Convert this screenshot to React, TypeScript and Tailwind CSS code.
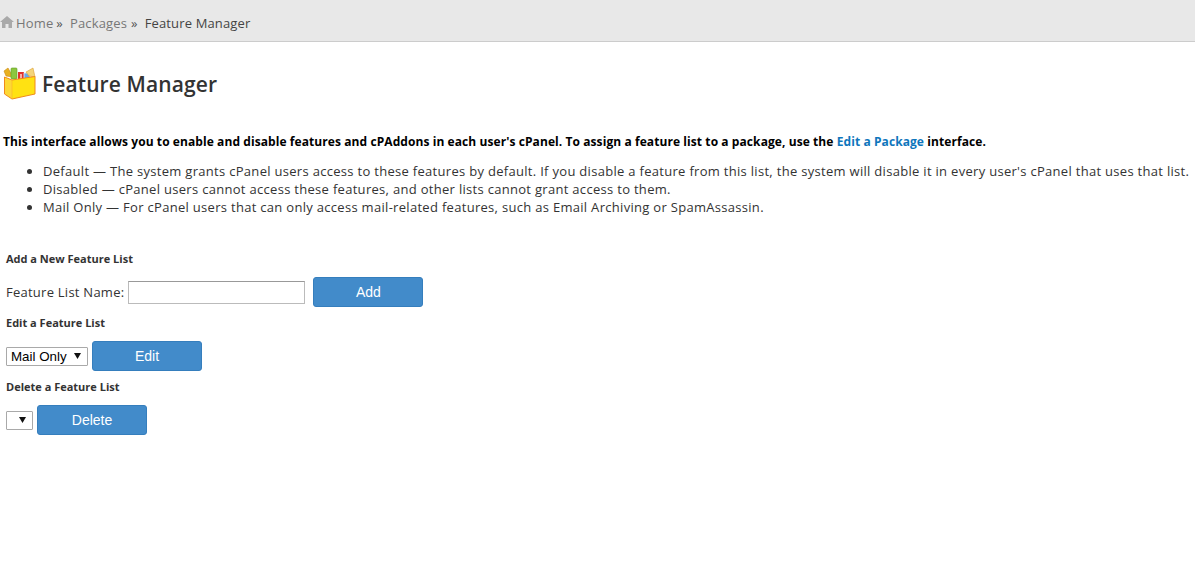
import React from "react";

const font = "font-['Open_Sans',sans-serif]";
const arial = "font-['Liberation_Sans',Arial,sans-serif]";

function Box() {
  return (
    <svg width="34" height="34" viewBox="3 4 34 34" className="block shrink-0">
      <path d="M6 13 L4 8 L8 5 L13 14 Z" fill="#e8b020" stroke="#c98a10" strokeWidth="0.6" />
      <rect x="11" y="5" width="6" height="11" rx="1" fill="#8cc63f" stroke="#5f9e20" strokeWidth="0.6" />
      <rect x="18" y="9" width="6" height="8" fill="#e0322c" />
      <rect x="20" y="11" width="2" height="6" fill="#f8b0a8" />
      <rect x="24" y="10" width="6" height="7" fill="#6aa7e8" stroke="#e8f0fb" strokeWidth="0.8" />
      <path d="M26 9 L33 5 L35 14 L29 13 Z" fill="#f4d47a" stroke="#dca030" strokeWidth="0.6" />
      <path d="M4.5 14 L12 17 L12 36 L4.5 31 Z" fill="#fdd835" />
      <path d="M12 17 L35 13.5 L35 31 L12 36 Z" fill="#ffe212" />
      <path d="M4.5 14 L12 17 L35 13.5 L35 31 L12 36 L4.5 31 Z" fill="none" stroke="#f08a1c" strokeWidth="1" strokeLinejoin="round" />
      <path d="M12 17 L12 36" fill="none" stroke="#f9b82a" strokeWidth="0.7" />
    </svg>
  );
}

function Home() {
  return (
    <svg width="14" height="12" viewBox="0 0 14 12" className="block -mt-[4px] shrink-0">
      <path d="M7 0 L14 6 L12 6 L12 12 L8.5 12 L8.5 8 L5.5 8 L5.5 12 L2 12 L2 6 L0 6 Z" fill="#a9a9a9" />
    </svg>
  );
}

function Heading({ children }: { children: React.ReactNode }) {
  return <h4 className="text-[11px] leading-[15px] font-bold text-[#333333] tracking-normal">{children}</h4>;
}

function Btn({ children }: { children: React.ReactNode }) {
  return (
    <button className={`${arial} w-[110px] h-[30px] rounded-[3px] bg-[#428bca] border border-[#357ebd] text-white text-[14px] tracking-normal`}>
      {children}
    </button>
  );
}

function Select({ width, label }: { width: string; label?: string }) {
  return (
    <div className={`relative h-[19px] ${width}`}>
      <select className={`${arial} appearance-none w-full h-full border border-[#a9a9a9] rounded-[1px] bg-white text-[13.33px] leading-[17px] pl-[4px] tracking-normal text-black`}>
        {label ? <option>{label}</option> : <option></option>}
      </select>
      <svg width="7" height="6" viewBox="0 0 7 6" className="absolute right-[7px] top-[6px] pointer-events-none">
        <path d="M0 0 H7 L3.5 6 Z" fill="#111111" />
      </svg>
    </div>
  );
}

export default function App() {
  return (
    <div className={`${font} min-h-[566px] bg-white text-[#333333] text-[13px] tracking-[0.3px]`}>
      <div className="h-[42px] bg-[#e8e8e8] border-b border-[#cccccc] flex items-center pt-[7px] tracking-[0.15px]">
        <Home />
        <a className="ml-[2px] text-[#777777]">Home</a>
        <span className="ml-[3px] text-[#555555]">»</span>
        <a className="ml-[7px] text-[#777777]">Packages</a>
        <span className="ml-[4px] text-[#555555]">»</span>
        <span className="ml-[7px] text-[#444444]">Feature Manager</span>
      </div>
      <div className="flex items-center pl-[3px] mt-[25px] gap-[5px]">
        <Box />
        <h1 className="text-[21px] leading-[34px] font-semibold tracking-[0.1px] text-[#333333]">Feature Manager</h1>
      </div>
      <p className="mt-[33px] pl-[3px] text-[12px] leading-[16px] font-bold text-black tracking-[0.08px] whitespace-nowrap">
        This interface allows you to enable and disable features and cPAddons in each user's cPanel. To assign a feature list to a package, use the{" "}
        <a className="text-[#0e76bc]">Edit a Package</a> interface.
      </p>
      <ul className="mt-[12px] pl-[43px] list-disc leading-[18px] whitespace-nowrap">
        <li>Default — The system grants cPanel users access to these features by default. If you disable a feature from this list, the system will disable it in every user's cPanel that uses that list.</li>
        <li>Disabled — cPanel users cannot access these features, and other lists cannot grant access to them.</li>
        <li>Mail Only — For cPanel users that can only access mail-related features, such as Email Archiving or SpamAssassin.</li>
      </ul>
      <div className="pl-[6px] mt-[35px]">
        <Heading>Add a New Feature List</Heading>
        <div className="flex items-center mt-[11px] h-[30px]">
          <label className="tracking-[0.25px] pt-[1px]">Feature List Name:</label>
          <input className="ml-[4px] w-[177px] h-[23px] border border-[#bbbbbb] border-t-[#999999] bg-white" />
          <span className="ml-[8px]"><Btn>Add</Btn></span>
        </div>
        <div className="mt-[8px]"><Heading>Edit a Feature List</Heading></div>
        <div className="flex items-center mt-[11px] h-[30px] gap-[4px]">
          <Select width="w-[82px]" label="Mail Only" />
          <Btn>Edit</Btn>
        </div>
        <div className="mt-[8px]"><Heading>Delete a Feature List</Heading></div>
        <div className="flex items-center mt-[11px] h-[30px] gap-[4px]">
          <Select width="w-[27px]" />
          <Btn>Delete</Btn>
        </div>
      </div>
    </div>
  );
}
